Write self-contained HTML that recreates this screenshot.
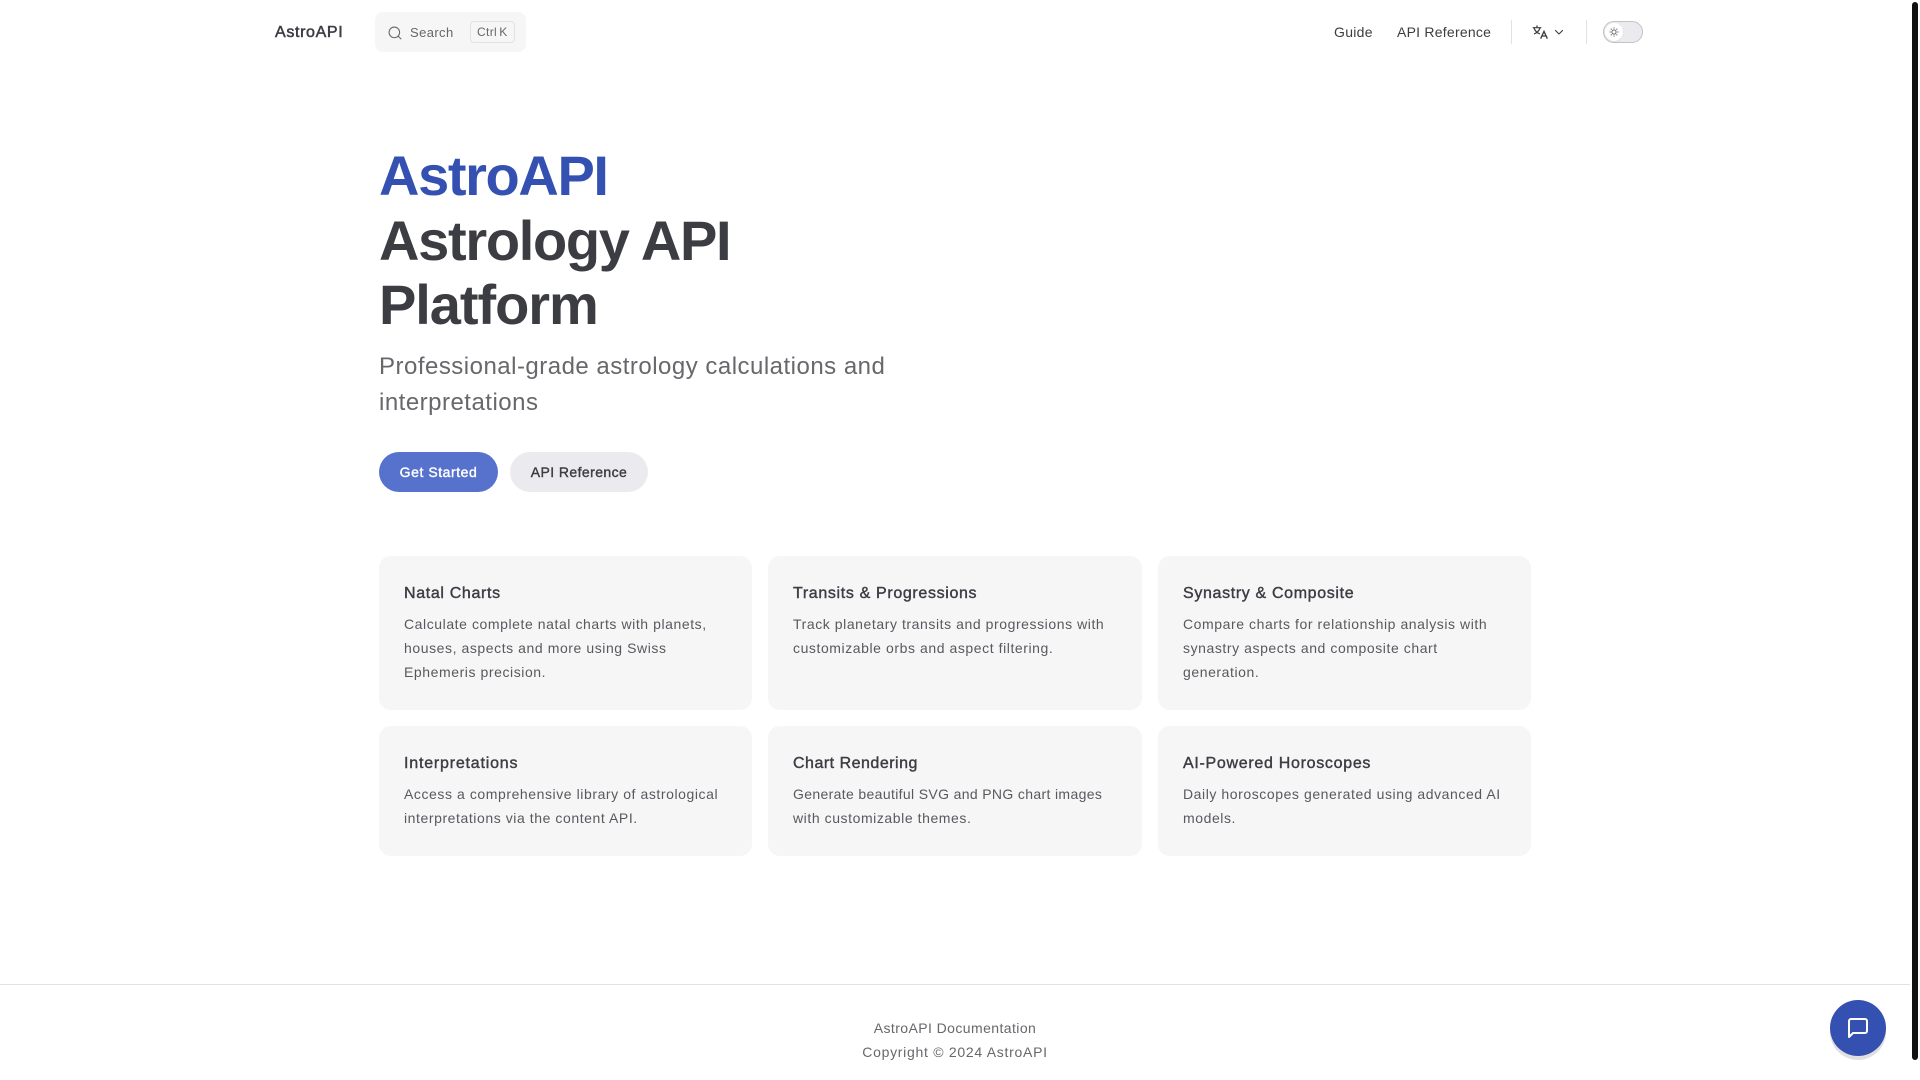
<!DOCTYPE html>
<html lang="en">
<head>
<meta charset="utf-8">
<title>AstroAPI</title>
<style>
html,body{margin:0;padding:0;width:1920px;height:1080px;overflow:hidden;background:#fff}
body{font-family:"Liberation Sans",Arial,sans-serif;color:#3c3c43;position:relative;-webkit-font-smoothing:antialiased}
.a{position:absolute;white-space:nowrap}
.card{position:absolute;background:#f6f6f7;border-radius:12px}
.ct{position:absolute;left:25px;top:26px;font-size:16px;line-height:24px;font-weight:400;color:#3c3c43;white-space:nowrap;letter-spacing:.65px;-webkit-text-stroke:.4px #3c3c43}
.cd{position:absolute;left:25px;top:56px;font-size:14px;line-height:24px;color:rgba(60,60,67,.85);white-space:nowrap;letter-spacing:.57px}
.btn{position:absolute;top:452px;height:40px;border-radius:20px;font-size:14px;line-height:40px;text-align:center;font-weight:400;letter-spacing:.42px;white-space:nowrap}
svg{display:block}
</style>
</head>
<body>
<!-- Nav -->
<div class="a" style="left:275px;top:21px;font-size:16px;line-height:24px;font-weight:400;letter-spacing:.65px;color:#3c3c43;-webkit-text-stroke:.5px #3c3c43">AstroAPI</div>
<div class="a" style="left:375px;top:12px;width:151px;height:40px;background:#f6f6f7;border-radius:8px"></div>
<svg class="a" style="left:388px;top:26px;color:#67676c" width="14" height="14" viewBox="0 0 20 20"><path d="m14.386 14.386 4.0877 4.0877-4.0877-4.0877c-2.9418 2.9419-7.7115 2.9419-10.6533 0-2.9419-2.9418-2.9419-7.7115 0-10.6533 2.9418-2.9419 7.7115-2.9419 10.6533 0 2.9419 2.9418 2.9419 7.7115 0 10.6533z" stroke="currentColor" fill="none" stroke-width="1.5" stroke-linecap="round" stroke-linejoin="round"/></svg>
<div class="a" style="left:410px;top:22px;font-size:13px;line-height:22px;color:#67676c;letter-spacing:.4px">Search</div>
<div class="a" style="left:470px;top:21px;width:43px;height:20px;border:1px solid #e2e2e3;border-radius:4px"></div>
<div class="a" style="left:477px;top:22px;font-size:12px;line-height:20px;color:#67676c;letter-spacing:.35px;word-spacing:-1.5px">Ctrl K</div>

<div class="a" style="left:1334px;top:20px;font-size:14px;line-height:24px;color:#3c3c43;letter-spacing:.3px">Guide</div>
<div class="a" style="left:1397px;top:20px;font-size:14px;line-height:24px;color:#3c3c43;letter-spacing:.24px">API Reference</div>
<div class="a" style="left:1511px;top:20px;width:1px;height:24px;background:#e2e2e3"></div>
<svg class="a" style="left:1532px;top:24px" width="16" height="16" viewBox="0 0 24 24" fill="none" stroke="#3c3c43" stroke-width="2"><path d="M1 5.5h13M7.5 2v3.5M3 6c1 3 4 7 9 9M12 6c-1 3-4 7-9 9" stroke-width="1.8"/><path d="M13 22l5-11 5 11M15 18h6" stroke-width="2"/></svg>
<svg class="a" style="left:1553px;top:26px" width="12" height="12" viewBox="0 0 24 24" fill="none" stroke="#3c3c43" stroke-width="2.2" stroke-linecap="round" stroke-linejoin="round"><path d="M5 9l7 7 7-7"/></svg>
<div class="a" style="left:1586px;top:20px;width:1px;height:24px;background:#e2e2e3"></div>
<div class="a" style="left:1603px;top:21px;width:38px;height:20px;border:1px solid #c2c2c4;border-radius:11px;background:#ebebef"></div>
<div class="a" style="left:1605px;top:23px;width:18px;height:18px;border-radius:50%;background:#fff;box-shadow:0 1px 2px rgba(0,0,0,.06)"></div>
<svg class="a" style="left:1609px;top:27px" width="10" height="10" viewBox="0 0 24 24" fill="none" stroke="#67676c" stroke-width="2.4"><circle cx="12" cy="12" r="5"/><path d="M12 1v3M12 20v3M1 12h3M20 12h3M4.2 4.2l2.1 2.1M17.7 17.7l2.1 2.1M4.2 19.8l2.1-2.1M17.7 6.3l2.1-2.1"/></svg>

<!-- Hero -->
<div class="a" style="left:379px;top:144px;font-size:56px;line-height:64px;font-weight:700;letter-spacing:-1.37px;color:#3451b2">AstroAPI</div>
<div class="a" style="left:379px;top:209px;font-size:56px;line-height:64px;font-weight:700;letter-spacing:-1.3px;color:#3c3c43">Astrology API</div>
<div class="a" style="left:379px;top:273px;font-size:56px;line-height:64px;font-weight:700;letter-spacing:-1.05px;color:#3c3c43">Platform</div>
<div class="a" style="left:379px;top:349px;font-size:24px;line-height:36px;color:#67676c;letter-spacing:.49px">Professional-grade astrology calculations and</div>
<div class="a" style="left:379px;top:385px;font-size:24px;line-height:36px;color:#67676c;letter-spacing:.49px">interpretations</div>

<div class="btn" style="left:379px;width:119px;background:#5672cd;color:#fff;-webkit-text-stroke:.4px #fff;letter-spacing:.55px">Get Started</div>
<div class="btn" style="left:510px;width:138px;background:#ebebef;color:#3c3c43;-webkit-text-stroke:.4px #3c3c43">API Reference</div>

<!-- Cards -->
<div class="card" style="left:379px;top:556px;width:373px;height:154px">
<div class="ct">Natal Charts</div>
<div class="cd">Calculate complete natal charts with planets,<br>houses, aspects and more using Swiss<br>Ephemeris precision.</div>
</div>
<div class="card" style="left:768px;top:556px;width:374px;height:154px">
<div class="ct">Transits &amp; Progressions</div>
<div class="cd">Track planetary transits and progressions with<br>customizable orbs and aspect filtering.</div>
</div>
<div class="card" style="left:1158px;top:556px;width:373px;height:154px">
<div class="ct">Synastry &amp; Composite</div>
<div class="cd">Compare charts for relationship analysis with<br>synastry aspects and composite chart<br>generation.</div>
</div>
<div class="card" style="left:379px;top:726px;width:373px;height:130px">
<div class="ct" style="letter-spacing:.8px">Interpretations</div>
<div class="cd">Access a comprehensive library of astrological<br>interpretations via the content API.</div>
</div>
<div class="card" style="left:768px;top:726px;width:374px;height:130px">
<div class="ct" style="letter-spacing:.5px">Chart Rendering</div>
<div class="cd"><span style="letter-spacing:.35px">Generate beautiful SVG and PNG chart images</span><br>with customizable themes.</div>
</div>
<div class="card" style="left:1158px;top:726px;width:373px;height:130px">
<div class="ct" style="letter-spacing:.7px">AI-Powered Horoscopes</div>
<div class="cd">Daily horoscopes generated using advanced AI<br>models.</div>
</div>

<!-- Footer -->
<div class="a" style="left:0;top:1016px;width:1910px;text-align:center;font-size:14px;line-height:24px;color:#67676c;letter-spacing:.42px">AstroAPI Documentation</div>
<div class="a" style="left:0;top:984px;width:1910px;height:1px;background:#e2e2e3"></div>
<div class="a" style="left:0;top:1040px;width:1910px;text-align:center;font-size:14px;line-height:24px;color:#67676c;letter-spacing:.72px">Copyright © 2024 AstroAPI</div>

<!-- Chat -->
<div class="a" style="left:1830px;top:1000px;width:56px;height:56px;border-radius:50%;background:#3451b2;box-shadow:0 4px 0 rgba(0,0,0,.12)"></div>
<svg class="a" style="left:1846px;top:1016px" width="24" height="24" viewBox="0 0 24 24" fill="none" stroke="#fff" stroke-width="2" stroke-linejoin="round"><path d="M21 15a2 2 0 0 1-2 2H7l-4 4V5a2 2 0 0 1 2-2h14a2 2 0 0 1 2 2z"/></svg>

<!-- Scrollbar -->
<div class="a" style="left:1912px;top:2px;width:6px;height:1058px;background:#111;border-radius:3px"></div>
</body>
</html>
